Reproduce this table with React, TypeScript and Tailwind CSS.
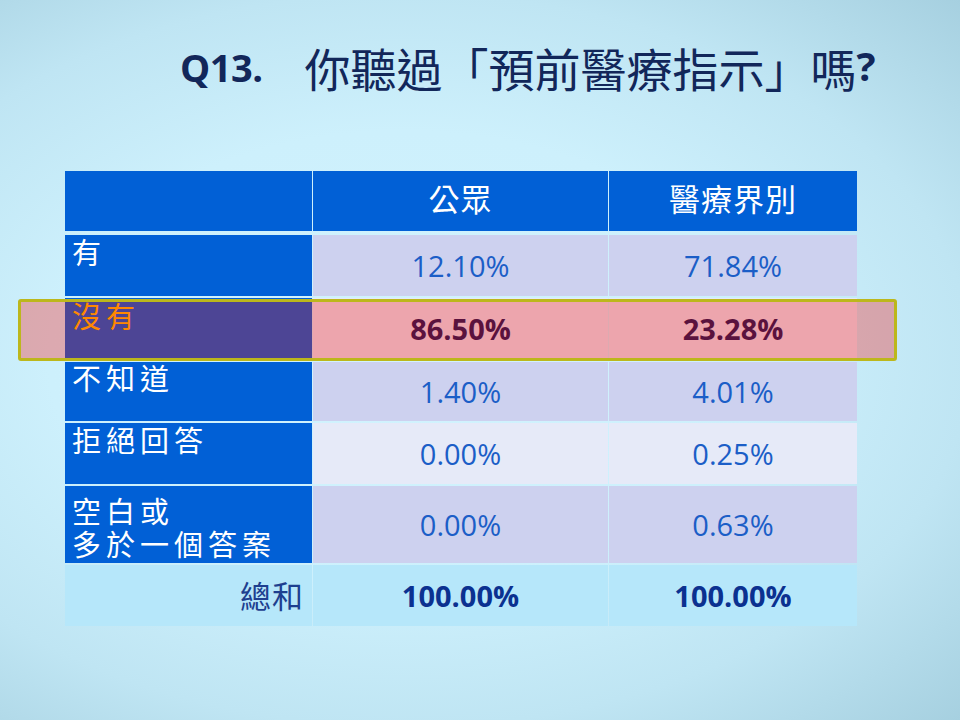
import React from 'react';

const cjk = "font-['Noto_Sans_CJK_TC','Noto_Sans_CJK_SC',sans-serif]";
const labelFont = "font-['Liberation_Sans','Noto_Sans_CJK_TC','Noto_Sans_CJK_SC',sans-serif]";
const latin = "font-['Open_Sans','Liberation_Sans',sans-serif]";

type Row = {
  label: string[];
  a: string;
  b: string;
  rowClass: string; // height + top gap
  cellBg: string;
  labelClass: string;
  valueClass: string;
};

const rows: Row[] = [
  {
    label: ['有'],
    a: '12.10%',
    b: '71.84%',
    rowClass: 'h-[61px] mt-[4px]',
    cellBg: 'bg-[#cdd1ef]',
    labelClass: 'text-white pt-[3px]',
    valueClass: 'text-[#1b5ec7]',
  },
  {
    label: ['沒有'],
    a: '86.50%',
    b: '23.28%',
    rowClass: 'h-[62px] mt-[2px]',
    cellBg: 'bg-[#e6eaf8]',
    labelClass: 'text-[#ffc000] pt-[4px]',
    valueClass: 'text-[#14185a] font-bold',
  },
  {
    label: ['不知道'],
    a: '1.40%',
    b: '4.01%',
    rowClass: 'h-[59px] mt-[2px]',
    cellBg: 'bg-[#cdd1ef]',
    labelClass: 'text-white pt-[2px]',
    valueClass: 'text-[#1b5ec7]',
  },
  {
    label: ['拒絕回答'],
    a: '0.00%',
    b: '0.25%',
    rowClass: 'h-[61px] mt-[2px]',
    cellBg: 'bg-[#e6eaf8]',
    labelClass: 'text-white pt-[3px]',
    valueClass: 'text-[#1b5ec7]',
  },
  {
    label: ['空白或', '多於一個答案'],
    a: '0.00%',
    b: '0.63%',
    rowClass: 'h-[77px] mt-[2px]',
    cellBg: 'bg-[#cdd1ef]',
    labelClass: 'text-white pt-[11px]',
    valueClass: 'text-[#1b5ec7]',
  },
];

export default function App() {
  return (
    <div className="relative w-[960px] h-[720px] overflow-hidden bg-[radial-gradient(ellipse_at_42%_50%,#d2f3fe_0%,#cdf0fc_45%,#bfe5f3_72%,#a6d0e0_100%)]">
      {/* Title */}
      <div className="h-[171px] pl-[180px] pt-[40px]">
        <div className="flex items-start text-[#12275a]">
          <span className={`${latin} font-bold text-[38px] leading-none mt-[8px] tracking-[-0.5px]`}>Q13.</span>
          <span className={`${cjk} font-normal text-[46px] leading-none mt-[4px] ml-[42px]`}>你聽過「預前醫療指示」嗎</span>
          <span className={`${latin} font-bold text-[40px] leading-none mt-[6px]`}>?</span>
        </div>
      </div>

      {/* Table */}
      <div className="ml-[65px] w-[792px]">
        <div className="grid grid-cols-[247px_295px_248px] gap-x-[1px] h-[60px]">
          <div className="bg-[#0160d6]" />
          <div className={`bg-[#0160d6] flex items-center justify-center text-white text-[31px] pb-[6px] tracking-[1px] ${cjk}`}>
            公眾
          </div>
          <div className={`bg-[#0160d6] flex items-center justify-center text-white text-[31px] pb-[6px] tracking-[1px] ${cjk}`}>
            醫療界別
          </div>
        </div>

        {rows.map((r) => (
          <div key={r.a + r.b + r.label[0]} className={`grid grid-cols-[247px_295px_248px] gap-x-[1px] ${r.rowClass}`}>
            <div className={`bg-[#0160d6] pl-[7px] text-[29px] leading-[33px] tracking-[5px] ${labelFont} ${r.labelClass}`}>
              {r.label.map((l) => (
                <div key={l}>{l}</div>
              ))}
            </div>
            <div className={`${r.cellBg} flex items-center justify-center text-[29px] ${latin} ${r.valueClass}`}>{r.a}</div>
            <div className={`${r.cellBg} flex items-center justify-center text-[29px] ${latin} ${r.valueClass}`}>{r.b}</div>
          </div>
        ))}

        <div className="grid grid-cols-[247px_295px_248px] gap-x-[1px] h-[61px] mt-[2px]">
          <div className={`bg-[#b6e7fa] flex items-center justify-end pr-[8px] text-[31px] text-[#1e3f8f] tracking-[1px] ${cjk}`}>
            總和
          </div>
          <div className={`bg-[#b6e7fa] flex items-center justify-center text-[29px] font-bold text-[#0b3190] ${latin}`}>100.00%</div>
          <div className={`bg-[#b6e7fa] flex items-center justify-center text-[29px] font-bold text-[#0b3190] ${latin}`}>100.00%</div>
        </div>
      </div>

      {/* Highlight box over the 沒有 row */}
      <div className="absolute left-[18px] top-[299px] w-[879px] h-[62px] rounded-[3px] border-[3px] border-[#bcb71c] bg-[rgba(255,6,0,0.3)] pointer-events-none" />
    </div>
  );
}
